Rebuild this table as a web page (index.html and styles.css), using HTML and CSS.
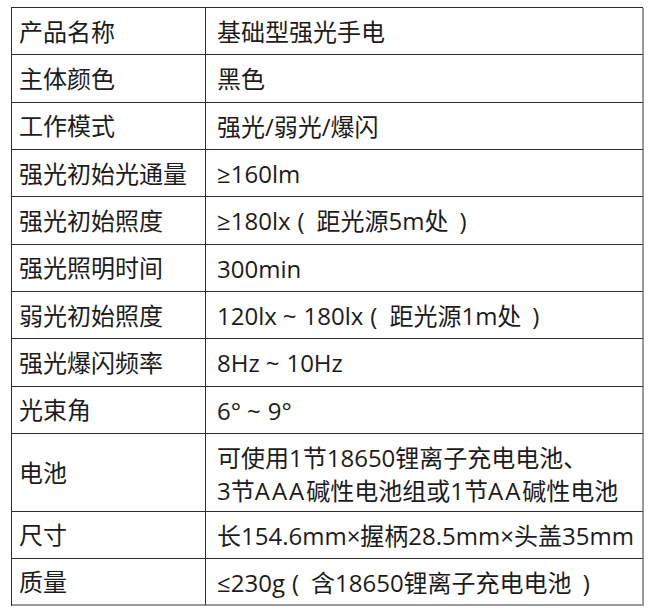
FILE: index.html
```html
<!DOCTYPE html>
<html lang="zh-CN">
<head>
<meta charset="utf-8">
<title>基础型强光手电</title>
<link rel="stylesheet" href="styles.css">
</head>
<body>
<div class="spec">
  <div class="k">产品名称</div><div class="v">基础型强光手电</div>
  <div class="k">主体颜色</div><div class="v">黑色</div>
  <div class="k">工作模式</div><div class="v">强光/弱光/爆闪</div>
  <div class="k">强光初始光通量</div><div class="v">≥160lm</div>
  <div class="k">强光初始照度</div><div class="v">≥180lx<span class="pl">(</span>距光源5m处<span class="pr">)</span></div>
  <div class="k">强光照明时间</div><div class="v">300min</div>
  <div class="k">弱光初始照度</div><div class="v">120lx<span class="tl">~</span>180lx<span class="pl">(</span>距光源1m处<span class="pr">)</span></div>
  <div class="k">强光爆闪频率</div><div class="v">8Hz<span class="tl">~</span>10Hz</div>
  <div class="k">光束角</div><div class="v">6°<span class="tl">~</span>9°</div>
  <div class="k">电池</div><div class="v">可使用1节18650锂离子充电电池、<br>3节<span class="wide">AAA</span>碱性电池组或1节<span class="wide">AA</span>碱性电池</div>
  <div class="k">尺寸</div><div class="v">长154.6mm×握柄28.5mm×头盖35mm</div>
  <div class="k last">质量</div><div class="v last">≤230g<span class="pl">(</span>含18650锂离子充电电池<span class="pr">)</span></div>
</div>
</body>
</html>
```
FILE: styles.css
```css
html, body {
  margin: 0;
  padding: 0;
  background: #ffffff;
}
body {
  padding: 7px 0 0 11px;
  font-family: "Open Sans", "Noto Sans CJK SC", sans-serif;
  font-size: 24px;
  color: #1c1c1c;
}
.spec {
  display: grid;
  width: 632px;
  grid-template-columns: 194px 438px;
  grid-template-rows: repeat(9, 47.33px) 78px 47px 47px;
  border-top: 1px solid #2e2e2e;
  border-left: 1px solid #2e2e2e;
  box-sizing: border-box;
}
.k, .v {
  border-bottom: 1px solid #2e2e2e;
  line-height: 33px;
  white-space: nowrap;
  box-sizing: border-box;
  display: flex;
  flex-direction: column;
  justify-content: center;
}
.k {
  padding-left: 7px;
  border-right: 1px solid #2e2e2e;
}
.v {
  padding-left: 11px;
  border-right: 2px solid #9a9a9a;
  display: block;
  padding-top: 7px;
}
.last {
  border-bottom: 2px solid #9a9a9a;
}
.tl {
  display: inline-block;
  margin: 0 7px 0 6px;
}
.pl {
  display: inline-block;
  margin: 0 12px 0 7px;
}
.pr {
  display: inline-block;
  margin: 0 0 0 11px;
}
.wide {
  letter-spacing: 2px;
}
```
